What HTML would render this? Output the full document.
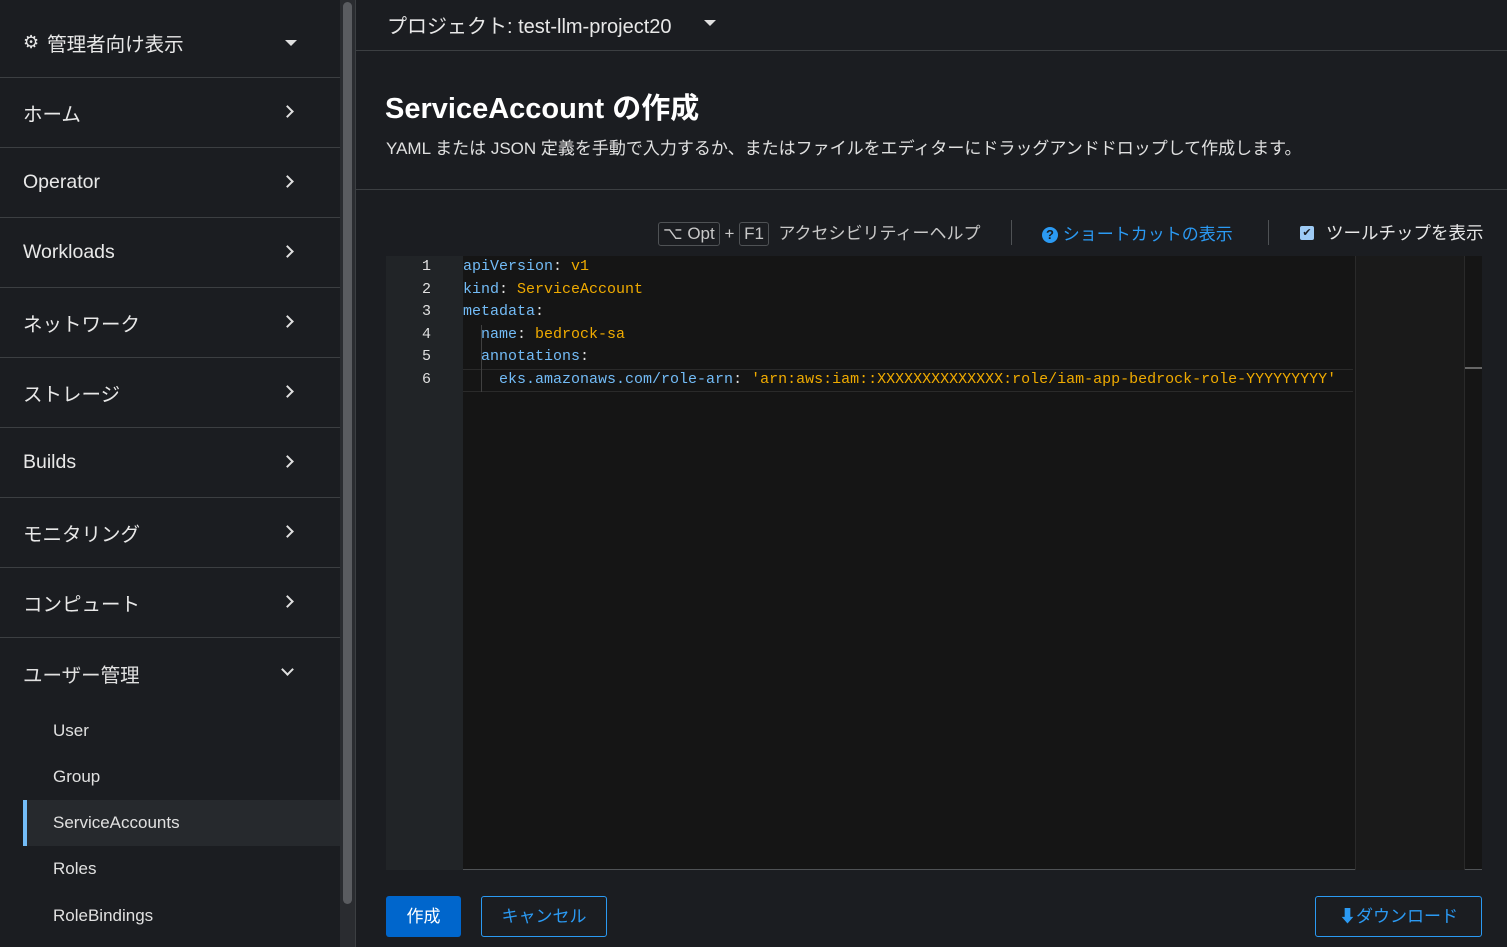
<!DOCTYPE html><html><head><meta charset="utf-8"><style>
*{box-sizing:border-box;margin:0;padding:0}
body{width:1507px;height:947px;background:#1b1d21;color:#e0e0e0;font-family:"Liberation Sans","Noto Sans CJK JP",sans-serif;position:relative;overflow:hidden}
.sb{position:absolute;left:0;top:0;width:340px;height:947px;background:#1b1d21}
.it{position:absolute;left:0;width:340px;height:70px;border-bottom:1px solid #3c3f42;font-size:19.5px;color:#e8e8e8;padding-left:23px;display:flex;align-items:center}
.chev{position:absolute;left:283px;top:50%;margin-top:-6px;width:9px;height:9px;border-right:2.5px solid #e0e0e0;border-bottom:2.5px solid #e0e0e0;transform:rotate(-45deg)}
.sub{position:absolute;left:53px;font-size:17px;color:#e0e0e0}
.scroll{position:absolute;left:340px;top:0;width:16px;height:947px;background:#2a2c30;border-right:1px solid #3c3f42}
.scroll div{position:absolute;left:3px;top:2px;width:9px;height:902px;background:#5a5c60;border-radius:5px}
.code{position:absolute;font-family:"Liberation Mono",monospace;font-size:15px;line-height:22.6px;white-space:pre}
.k{color:#73bcf7}.v{color:#f0ab00}
.ln{position:absolute;left:386px;width:77px;text-align:right;padding-right:32px;font-family:"Liberation Mono",monospace;font-size:15px;line-height:22.6px;color:#e0e0e0}
.kbd{display:inline-block;border:1px solid #4f5255;border-radius:3px;padding:0 4px;height:24px;line-height:22px}
</style></head><body>
<div class="sb">
<div class="it" style="top:7px;height:71px"><span style="font-size:18px;margin-right:8px">⚙</span>管理者向け表示<span style="position:absolute;left:285px;top:33px;border-left:6px solid transparent;border-right:6px solid transparent;border-top:6px solid #e0e0e0"></span></div>
<div class="it" style="top:78px">ホーム<i class="chev"></i></div>
<div class="it" style="top:148px">Operator<i class="chev"></i></div>
<div class="it" style="top:218px">Workloads<i class="chev"></i></div>
<div class="it" style="top:288px">ネットワーク<i class="chev"></i></div>
<div class="it" style="top:358px">ストレージ<i class="chev"></i></div>
<div class="it" style="top:428px">Builds<i class="chev"></i></div>
<div class="it" style="top:498px">モニタリング<i class="chev"></i></div>
<div class="it" style="top:568px">コンピュート<i class="chev"></i></div>
<div style="position:absolute;left:0;top:638px;width:340px;height:70px;font-size:19.5px;padding-left:23px;display:flex;align-items:center">ユーザー管理<i class="chev" style="transform:rotate(45deg);margin-top:-8px"></i></div>
<div class="sub" style="top:721px">User</div>
<div class="sub" style="top:767px">Group</div>
<div style="position:absolute;left:23px;top:800px;width:317px;height:46px;background:#26292d;border-left:4px solid #73bcf7"></div>
<div class="sub" style="top:813px">ServiceAccounts</div>
<div class="sub" style="top:859px">Roles</div>
<div class="sub" style="top:906px">RoleBindings</div>
</div>
<div class="scroll"><div></div></div>
<div style="position:absolute;left:387px;top:10px;font-size:20px;color:#e8e8e8">プロジェクト: test-llm-project20</div>
<div style="position:absolute;left:704px;top:20px;border-left:6px solid transparent;border-right:6px solid transparent;border-top:6px solid #e0e0e0"></div>
<div style="position:absolute;left:356px;top:50px;width:1151px;border-top:1px solid #3c3f42"></div>
<div style="position:absolute;left:385px;top:85px;font-size:29px;color:#fff;font-weight:bold">ServiceAccount の作成</div>
<div style="position:absolute;left:386px;top:134px;font-size:17px;color:#e0e0e0">YAML または JSON 定義を手動で入力するか、またはファイルをエディターにドラッグアンドドロップして作成します。</div>
<div style="position:absolute;left:356px;top:189px;width:1151px;border-top:1px solid #3c3f42"></div>
<div style="position:absolute;left:658px;top:219px;font-size:17px;color:#c8c8c8;white-space:nowrap"><span class="kbd">⌥ Opt</span> + <span class="kbd">F1</span>&nbsp; アクセシビリティーヘルプ</div>
<div style="position:absolute;left:1011px;top:220px;height:25px;border-left:1px solid #4f5255"></div>
<div style="position:absolute;left:1042px;top:220px;font-size:17px;color:#2b9af3"><span style="display:inline-block;width:16px;height:16px;border-radius:50%;background:#2b9af3;color:#1b1d21;font-size:13px;text-align:center;line-height:16px;font-weight:bold;vertical-align:1px">?</span> ショートカットの表示</div>
<div style="position:absolute;left:1268px;top:220px;height:25px;border-left:1px solid #4f5255"></div>
<div style="position:absolute;left:1300px;top:226px;width:14px;height:14px;background:#9ecbf5;border-radius:2px;color:#1b1d21;font-size:11px;text-align:center;line-height:14px">✔</div>
<div style="position:absolute;left:1326px;top:220px;font-size:17.5px;color:#e8e8e8">ツールチップを表示</div>
<div style="position:absolute;left:386px;top:256px;width:1096px;height:614px;background:#151515;border-bottom:1px solid #4f5255"></div>
<div style="position:absolute;left:386px;top:256px;width:77px;height:614px;background:#212427"></div>
<div style="position:absolute;left:1355px;top:256px;width:110px;height:614px;background:#1a1a1a;border-left:1px solid #2a2a2a;border-right:1px solid #2a2a2a"></div>
<div style="position:absolute;left:1465px;top:367px;width:17px;height:2px;background:#666"></div>
<div style="position:absolute;left:463px;top:369px;width:890px;height:23px;border-top:1px solid #2a2a2a;border-bottom:1px solid #2a2a2a"></div>
<div style="position:absolute;left:481px;top:325px;width:1px;height:67px;background:#404040"></div>
<div class="ln" style="top:256px">1<br>2<br>3<br>4<br>5<br>6</div>
<div class="code" style="left:463px;top:256px"><span class="k">apiVersion</span>: <span class="v">v1</span>
<span class="k">kind</span>: <span class="v">ServiceAccount</span>
<span class="k">metadata</span>:
  <span class="k">name</span>: <span class="v">bedrock-sa</span>
  <span class="k">annotations</span>:
    <span class="k">eks.amazonaws.com/role-arn</span>: <span class="v">'arn:aws:iam::XXXXXXXXXXXXXX:role/iam-app-bedrock-role-YYYYYYYYY'</span></div>
<div style="position:absolute;left:386px;top:896px;width:75px;height:41px;background:#0066cc;border-radius:3px;color:#fff;font-size:17px;text-align:center;line-height:41px">作成</div>
<div style="position:absolute;left:481px;top:896px;width:126px;height:41px;border:1px solid #2b9af3;border-radius:3px;color:#2b9af3;font-size:17px;text-align:center;line-height:39px">キャンセル</div>
<div style="position:absolute;left:1315px;top:896px;width:167px;height:41px;border:1px solid #2b9af3;border-radius:3px;color:#2b9af3;font-size:17px;text-align:center;line-height:39px">⬇ダウンロード</div>
</body></html>
